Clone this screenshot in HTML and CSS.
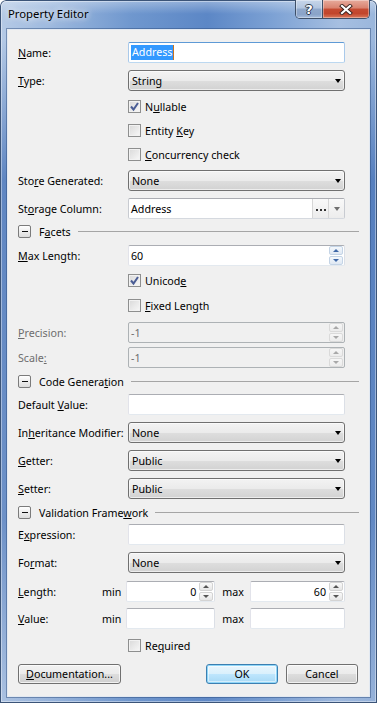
FILE: index.html
```html
<!DOCTYPE html>
<html lang="en">
<head>
    <meta charset="UTF-8">
    <meta name="viewport" content="width=device-width, initial-scale=1.0">
    <title>Property Editor</title>
    <link rel="stylesheet" href="styles.css">
</head>
<body>

<div class="window">
    <div class="titlebar">
        <span class="title">Property Editor</span>
        <div class="caption-btns">
            <div class="cbtn help">?</div>
            <div class="cbtn close">
                <svg width="14" height="11" viewBox="0 0 14 11">
                    <path d="M3 2 L11 9 M11 2 L3 9" stroke="#3a2420" stroke-width="4" stroke-linecap="square"/>
                    <path d="M3 2 L11 9 M11 2 L3 9" stroke="#fff" stroke-width="2.2" stroke-linecap="square"/>
                </svg>
            </div>
        </div>
    </div>

    <div class="client">
        <div class="row mt12">
            <label class="lbl"><u>N</u>ame:</label>
            <div class="field text focus"><span class="selected">Address</span><span class="caret"></span></div>
        </div>
        <div class="row">
            <label class="lbl"><u>T</u>ype:</label>
            <div class="field combo"><span>String</span><i class="arrow"></i></div>
        </div>
        <div class="row check mt5">
            <span class="checkbox checked"><svg width="11" height="11" viewBox="0 0 11 11"><path d="M2 5.5 L4.5 8.5 L9 2" fill="none" stroke="#4a5d95" stroke-width="2"/></svg></span>
            <span>N<u>u</u>llable</span>
        </div>
        <div class="row check mt3">
            <span class="checkbox"></span>
            <span>Entity <u>K</u>ey</span>
        </div>
        <div class="row check mt3">
            <span class="checkbox"></span>
            <span><u>C</u>oncurrency check</span>
        </div>
        <div class="row mt5">
            <label class="lbl">Sto<u>r</u>e Generated:</label>
            <div class="field combo"><span>None</span><i class="arrow"></i></div>
        </div>
        <div class="row">
            <label class="lbl">St<u>o</u>rage Column:</label>
            <div class="field text storage">
                <span class="value">Address</span>
                <span class="pick dots"><i></i><i></i><i></i></span>
                <span class="pick"><i class="arrow gray"></i></span>
            </div>
        </div>

        <div class="group mt6">
            <span class="toggle"></span>
            <span class="group-title">F<u>a</u>cets</span>
            <span class="rule"></span>
        </div>
        <div class="row">
            <label class="lbl"><u>M</u>ax Length:</label>
            <div class="field text nud">
                <span class="value">60</span>
                <span class="spin blue"><span class="spin-btn"><i class="up"></i></span><span class="spin-btn"><i class="down"></i></span></span>
            </div>
        </div>
        <div class="row check mt4">
            <span class="checkbox checked"><svg width="11" height="11" viewBox="0 0 11 11"><path d="M2 5.5 L4.5 8.5 L9 2" fill="none" stroke="#4a5d95" stroke-width="2"/></svg></span>
            <span>Unicod<u>e</u></span>
        </div>
        <div class="row check mt4">
            <span class="checkbox"></span>
            <span><u>F</u>ixed Length</span>
        </div>
        <div class="row mt6 disabled">
            <label class="lbl"><u>P</u>recision:</label>
            <div class="field text nud">
                <span class="value">-1</span>
                <span class="spin"><span class="spin-btn"><i class="up"></i></span><span class="spin-btn"><i class="down"></i></span></span>
            </div>
        </div>
        <div class="row mt4 disabled">
            <label class="lbl">Scale<u>:</u></label>
            <div class="field text nud">
                <span class="value">-1</span>
                <span class="spin"><span class="spin-btn"><i class="up"></i></span><span class="spin-btn"><i class="down"></i></span></span>
            </div>
        </div>

        <div class="group">
            <span class="toggle"></span>
            <span class="group-title">Code Genera<u>t</u>ion</span>
            <span class="rule"></span>
        </div>
        <div class="row mt6">
            <label class="lbl">Default <u>V</u>alue:</label>
            <div class="field text"></div>
        </div>
        <div class="row">
            <label class="lbl">In<u>h</u>eritance Modifier:</label>
            <div class="field combo"><span>None</span><i class="arrow"></i></div>
        </div>
        <div class="row">
            <label class="lbl"><u>G</u>etter:</label>
            <div class="field combo"><span>Public</span><i class="arrow"></i></div>
        </div>
        <div class="row">
            <label class="lbl"><u>S</u>etter:</label>
            <div class="field combo"><span>Public</span><i class="arrow"></i></div>
        </div>

        <div class="group">
            <span class="toggle"></span>
            <span class="group-title">Validation Frame<u>w</u>ork</span>
            <span class="rule"></span>
        </div>
        <div class="row mt5">
            <label class="lbl">E<u>x</u>pression:</label>
            <div class="field text"></div>
        </div>
        <div class="row">
            <label class="lbl">Fo<u>r</u>mat:</label>
            <div class="field combo"><span>None</span><i class="arrow"></i></div>
        </div>
        <div class="row mt8">
            <label class="lbl grow"><u>L</u>ength:</label>
            <span class="minmax">min</span>
            <div class="field text nud small">
                <span class="value right">0</span>
                <span class="spin"><span class="spin-btn"><i class="up"></i></span><span class="spin-btn"><i class="down"></i></span></span>
            </div>
            <span class="minmax max">max</span>
            <div class="field text nud large">
                <span class="value right">60</span>
                <span class="spin"><span class="spin-btn"><i class="up"></i></span><span class="spin-btn"><i class="down"></i></span></span>
            </div>
        </div>
        <div class="row mt6">
            <label class="lbl grow"><u>V</u>alue:</label>
            <span class="minmax">min</span>
            <div class="field text small"></div>
            <span class="minmax max">max</span>
            <div class="field text large"></div>
        </div>
        <div class="row check mt6">
            <span class="checkbox"></span>
            <span>Re<u>q</u>uired</span>
        </div>

        <div class="buttons">
            <button class="doc"><u>D</u>ocumentation...</button>
            <span class="grow"></span>
            <button class="default">OK</button>
            <button>Cancel</button>
        </div>
    </div>
</div>

</body>
</html>
```

FILE: styles.css
```css
body {
    margin: 0;
    width: 377px;
    height: 703px;
    overflow: hidden;
    background-color: #ffffff;
    font-family: 'Noto Sans', 'Open Sans', sans-serif;
    font-size: 10.7px;
    color: #000;
}
u {
    text-decoration: underline;
    text-underline-offset: 1px;
}
.window {
    width: 377px;
    height: 703px;
    box-sizing: border-box;
    border-radius: 6px 6px 0 0;
    background:
        linear-gradient(180deg, rgba(255, 255, 255, 0.35) 0, rgba(255, 255, 255, 0) 14px),
        linear-gradient(180deg, rgba(40, 90, 170, 0) 40px, rgba(40, 90, 170, 0.6) 180px, rgba(40, 90, 170, 0.5) 520px, rgba(120, 150, 200, 0.15) 703px),
        linear-gradient(90deg, #b5cae6 0%, #a0bbdf 12%, #6f97ce 35%, #5c87c6 55%, #7ca1d4 72%, #a6bfe1 90%, #9ab6dc 100%);
    box-shadow: inset 0 0 0 1px #3b5478, inset 0 0 0 2px rgba(255, 255, 255, 0.4);
    display: flex;
    flex-direction: column;
}
.titlebar {
    height: 29px;
    display: flex;
    align-items: flex-start;
    justify-content: space-between;
    flex: none;
}
.title {
    padding: 6px 0 0 8px;
    line-height: 16px;
    font-size: 11.3px;
    text-shadow: 0 0 6px #fff, 0 0 10px rgba(255, 255, 255, 0.8);
}
.caption-btns {
    display: flex;
    margin-right: 7px;
    height: 18px;
    border: 1px solid #3e4f68;
    border-top: none;
    border-radius: 0 0 5px 5px;
    overflow: hidden;
}
.cbtn {
    height: 18px;
    display: flex;
    align-items: center;
    justify-content: center;
    box-shadow: inset 0 0 0 1px rgba(255, 255, 255, 0.35);
}
.help {
    width: 26px;
    border-right: 1px solid #3e4f68;
    background: linear-gradient(#c7d6ea 0%, #b2c5df 45%, #90a8cb 50%, #8aa3c8 80%, #a6bcdb 100%);
    color: #fff;
    font-family: 'DejaVu Sans', sans-serif;
    font-weight: bold;
    font-size: 13px;
    text-shadow: 1px 0 0 #2d3a4e, -1px 0 0 #2d3a4e, 0 1px 0 #2d3a4e, 0 -1px 0 #2d3a4e;
}
.close {
    width: 46px;
    background: linear-gradient(#e7ab9d 0%, #d9826f 45%, #c54b33 50%, #c2452c 75%, #d9785c 100%);
}
.client {
    margin: 0 7px;
    height: 668px;
    box-sizing: border-box;
    background-color: #f0f0f0;
    border: 1px solid #e2e9f2;
    box-shadow: 0 0 0 1px rgba(40, 70, 120, 0.45);
}
.row {
    display: flex;
    align-items: center;
    height: 21px;
    margin-top: 7px;
    padding: 0 24px 0 10px;
}
.lbl {
    width: 110px;
    flex: none;
}
.grow {
    flex: 1;
    width: auto;
}
.field {
    width: 217px;
    height: 21px;
    box-sizing: border-box;
    flex: none;
    display: flex;
    align-items: center;
}
.text {
    background-color: #fff;
    border: 1px solid;
    border-color: #abadb3 #dbdfe6 #e3e9ef #e2e3ea;
    border-radius: 2px;
}
.text.focus {
    border-color: #5e9ad6 #a9c9ea #bcd8f0 #a9c9ea;
    padding-left: 2px;
}
.selected {
    background-color: #3399ff;
    color: #fff;
    line-height: 15px;
    padding: 0 1px;
}
.caret {
    width: 1px;
    height: 15px;
    background-color: #c8741f;
}
.value {
    flex: 1;
    padding-left: 2px;
}
.value.right {
    text-align: right;
    padding-right: 3px;
}
.combo {
    border: 1px solid #707070;
    border-radius: 3px;
    background: linear-gradient(#f3f3f3 0%, #ebebeb 50%, #dedede 51%, #d2d2d2 100%);
    box-shadow: inset 0 0 0 1px rgba(255, 255, 255, 0.6);
    padding: 0 3px;
    justify-content: space-between;
}
.arrow {
    width: 0;
    height: 0;
    border-left: 3.5px solid transparent;
    border-right: 3.5px solid transparent;
    border-top: 4px solid #000;
}
.arrow.gray {
    border-top-color: #707070;
}
.storage {
    border-color: #abadb3 #c8cbd1 #d5d9df #c8cbd1;
}
.storage .value {
    padding-left: 2px;
}
.pick {
    width: 16px;
    height: 19px;
    box-sizing: border-box;
    border-left: 1px solid #d6d6d6;
    background: linear-gradient(#f9f9f9, #ececec);
    display: flex;
    align-items: center;
    justify-content: center;
    gap: 2px;
}
.dots i {
    width: 2px;
    height: 2px;
    background-color: #333;
    margin-top: 2px;
}
.spin {
    display: flex;
    flex-direction: column;
    gap: 1px;
    margin-right: 1px;
}
.spin-btn {
    width: 14px;
    height: 9px;
    box-sizing: border-box;
    border: 1px solid #d3d3d3;
    border-radius: 2px;
    background: linear-gradient(#fafafa, #e6e6e6);
    display: flex;
    align-items: center;
    justify-content: center;
}
.spin-btn .up {
    width: 0;
    height: 0;
    border-left: 3px solid transparent;
    border-right: 3px solid transparent;
    border-bottom: 3px solid #555;
}
.spin-btn .down {
    width: 0;
    height: 0;
    border-left: 3px solid transparent;
    border-right: 3px solid transparent;
    border-top: 3px solid #555;
}
.spin.blue .spin-btn {
    border-color: #c4d4e6;
    background: linear-gradient(#f4f8fc, #dfe8f3);
}
.spin.blue .up {
    border-bottom-color: #3f68a8;
}
.spin.blue .down {
    border-top-color: #3f68a8;
}
.disabled {
    color: #6d6d6d;
}
.disabled .text {
    background-color: #f0f0f0;
    border-color: #adb2b5;
}
.disabled .spin-btn {
    border-color: #dadada;
    background: linear-gradient(#f6f6f6, #ececec);
}
.disabled .spin-btn .up {
    border-bottom-color: #a8a8a8;
}
.disabled .spin-btn .down {
    border-top-color: #a8a8a8;
}
.minmax {
    margin-right: 5px;
}
.minmax.max {
    margin: 0 6px 0 7px;
}
.small {
    width: 89px;
}
.large {
    width: 95px;
}
.check {
    padding-left: 120px;
}
.checkbox {
    width: 13px;
    height: 13px;
    box-sizing: border-box;
    border: 1px solid #8e8f8f;
    background: linear-gradient(135deg, #d9d9d9, #f8f8f8);
    box-shadow: inset 0 0 0 1px #f2f2f2;
    margin-right: 4px;
    display: flex;
    align-items: center;
    justify-content: center;
}
.group {
    display: flex;
    align-items: center;
    height: 13px;
    margin-top: 7px;
    padding: 0 10px;
}
.toggle {
    width: 13px;
    height: 13px;
    box-sizing: border-box;
    border: 1px solid #7b7b7b;
    border-radius: 2px;
    background: linear-gradient(#ffffff, #dcdcdc);
    display: flex;
    align-items: center;
    justify-content: center;
    flex: none;
}
.toggle::after {
    content: "";
    width: 6px;
    height: 1px;
    background-color: #111;
}
.group-title {
    margin-left: 8px;
}
.rule {
    flex: 1;
    height: 1px;
    margin-left: 7px;
    background-color: #a5a5a5;
}
.buttons {
    display: flex;
    align-items: center;
    margin-top: 8px;
    padding: 0 11px 0 10px;
    gap: 8px;
}
button {
    width: 72px;
    height: 20px;
    padding: 0;
    border: 1px solid #707070;
    border-radius: 3px;
    background: linear-gradient(#f2f2f2 0%, #ebebeb 50%, #dddddd 51%, #cfcfcf 100%);
    box-shadow: inset 0 0 0 1px rgba(255, 255, 255, 0.7);
    font-family: 'Noto Sans', 'Open Sans', sans-serif;
    font-size: 10.7px;
    color: #000;
}
button.doc {
    width: 103px;
}
button.default {
    border-color: #3c7fb1;
    background: linear-gradient(#eaf6fd 0%, #d9f0fc 50%, #bee6fd 51%, #a7d9f5 100%);
    box-shadow: inset 0 0 0 1px #8fd6f8, inset 0 0 0 2px rgba(255, 255, 255, 0.5);
}

/* vertical spacing between rows */
.mt3 { margin-top: 3px; }
.mt4 { margin-top: 4px; }
.mt5 { margin-top: 5px; }
.mt6 { margin-top: 6px; }
.mt8 { margin-top: 8px; }
.mt12 { margin-top: 12px; }
```
